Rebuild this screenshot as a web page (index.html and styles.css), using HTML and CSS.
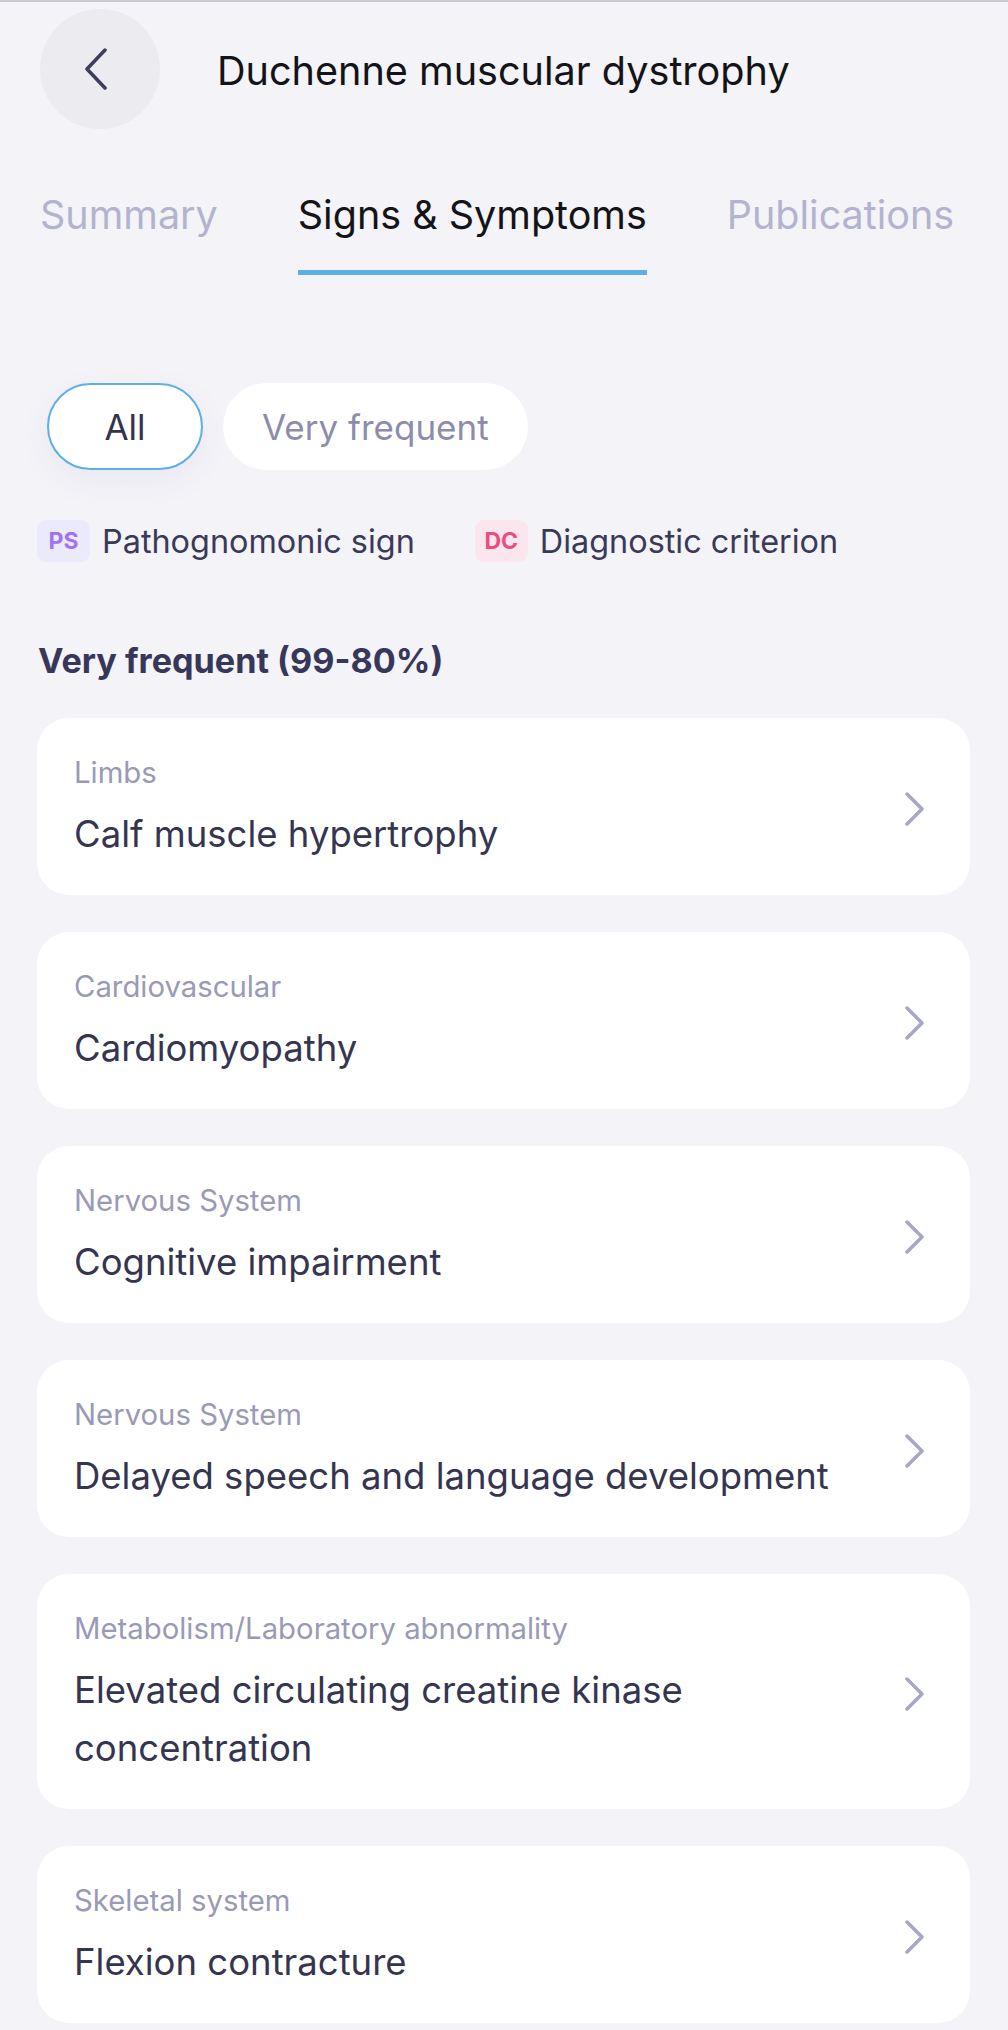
FILE: index.html
```html
<!DOCTYPE html>
<html lang="en">
<head>
<meta charset="utf-8">
<title>Duchenne muscular dystrophy</title>
<link rel="stylesheet" href="styles.css">
</head>
<body>
<div class="page">
  <header class="header">
    <button class="back" aria-label="Back">
      <svg width="24" height="42" viewBox="0 0 24 42"><path d="M21 2 L3 21 L21 40" fill="none" stroke="#3d3d5c" stroke-width="3.5" stroke-linecap="round" stroke-linejoin="round"/></svg>
    </button>
    <h1 class="title">Duchenne muscular dystrophy</h1>
  </header>

  <nav class="tabs">
    <div class="tab">Summary</div>
    <div class="tab active">Signs &amp; Symptoms</div>
    <div class="tab">Publications</div>
  </nav>

  <div class="chips">
    <div class="chip selected">All</div>
    <div class="chip">Very frequent</div>
  </div>

  <div class="legend">
    <div class="legend-item"><span class="badge ps">PS</span><span class="legend-text">Pathognomonic sign</span></div>
    <div class="legend-item"><span class="badge dc">DC</span><span class="legend-text">Diagnostic criterion</span></div>
  </div>

  <h2 class="section">Very frequent (99-80%)</h2>

  <div class="cards">
    <div class="card">
      <div class="card-body"><div class="label">Limbs</div><div class="name">Calf muscle hypertrophy</div></div>
      <svg class="chev" width="22" height="34" viewBox="0 0 22 34"><path d="M3 2 L18 17 L3 32" fill="none" stroke="#a6a6c6" stroke-width="3.5" stroke-linecap="round" stroke-linejoin="round"/></svg>
    </div>
    <div class="card">
      <div class="card-body"><div class="label">Cardiovascular</div><div class="name">Cardiomyopathy</div></div>
      <svg class="chev" width="22" height="34" viewBox="0 0 22 34"><path d="M3 2 L18 17 L3 32" fill="none" stroke="#a6a6c6" stroke-width="3.5" stroke-linecap="round" stroke-linejoin="round"/></svg>
    </div>
    <div class="card">
      <div class="card-body"><div class="label">Nervous System</div><div class="name">Cognitive impairment</div></div>
      <svg class="chev" width="22" height="34" viewBox="0 0 22 34"><path d="M3 2 L18 17 L3 32" fill="none" stroke="#a6a6c6" stroke-width="3.5" stroke-linecap="round" stroke-linejoin="round"/></svg>
    </div>
    <div class="card">
      <div class="card-body"><div class="label">Nervous System</div><div class="name">Delayed speech and language development</div></div>
      <svg class="chev" width="22" height="34" viewBox="0 0 22 34"><path d="M3 2 L18 17 L3 32" fill="none" stroke="#a6a6c6" stroke-width="3.5" stroke-linecap="round" stroke-linejoin="round"/></svg>
    </div>
    <div class="card">
      <div class="card-body"><div class="label">Metabolism/Laboratory abnormality</div><div class="name">Elevated circulating creatine kinase concentration</div></div>
      <svg class="chev" width="22" height="34" viewBox="0 0 22 34"><path d="M3 2 L18 17 L3 32" fill="none" stroke="#a6a6c6" stroke-width="3.5" stroke-linecap="round" stroke-linejoin="round"/></svg>
    </div>
    <div class="card">
      <div class="card-body"><div class="label">Skeletal system</div><div class="name">Flexion contracture</div></div>
      <svg class="chev" width="22" height="34" viewBox="0 0 22 34"><path d="M3 2 L18 17 L3 32" fill="none" stroke="#a6a6c6" stroke-width="3.5" stroke-linecap="round" stroke-linejoin="round"/></svg>
    </div>
  </div>
</div>
</body>
</html>
```

FILE: styles.css
```css
* { box-sizing: border-box; }
html, body {
  margin: 0;
  padding: 0;
  background: #f3f3f8;
  font-family: Inter, "Noto Sans", sans-serif;
}
.page {
  border-top: 2px solid #c9c9d2;
  padding-bottom: 40px;
}
.header {
  display: flex;
  align-items: center;
  padding: 7px 0 0 40px;
  gap: 57px;
}
.back {
  width: 120px;
  height: 120px;
  border-radius: 50%;
  background: #ebebf0;
  border: none;
  padding: 0 8px 0 0;
  display: flex;
  align-items: center;
  justify-content: center;
  flex: none;
}
.title {
  margin: 0;
  font-size: 39.6px;
  font-weight: 400;
  color: #141418;
  line-height: 48px;
  padding-top: 4px;
}
.tabs {
  display: flex;
  gap: 80px;
  margin-top: 62px;
  padding-left: 40px;
}
.tab {
  font-size: 39.5px;
  line-height: 48px;
  color: #b3b3cd;
  padding-bottom: 31px;
  border-bottom: 5px solid transparent;
  white-space: nowrap;
}
.tab.active {
  color: #141418;
  border-bottom-color: #5eaee8;
}
.chips {
  display: flex;
  gap: 20px;
  margin-top: 108px;
  padding-left: 47px;
}
.chip {
  height: 87px;
  border-radius: 44px;
  background: #ffffff;
  border: 2px solid transparent;
  display: flex;
  align-items: center;
  justify-content: center;
  padding: 0 37px;
  font-size: 35px;
  color: #8d8dab;
}
.chip.selected {
  width: 156px;
  border-color: #5eaee8;
  color: #33334f;
  box-shadow: 0 10px 34px rgba(60, 60, 100, 0.06);
}
.legend {
  display: flex;
  gap: 60px;
  margin-top: 50px;
  padding-left: 37px;
}
.legend-item {
  display: flex;
  align-items: center;
  gap: 12px;
}
.badge {
  width: 53px;
  height: 42px;
  border-radius: 9px;
  display: flex;
  align-items: center;
  justify-content: center;
  font-size: 23px;
  font-weight: 700;
}
.badge.ps { background: #ebeafa; color: #a173ee; }
.badge.dc { background: #fbe6ed; color: #ec4d80; }
.legend-text {
  font-size: 32.4px;
  color: #3a3a58;
}
.section {
  margin: 79px 0 37px 38px;
  font-size: 34.2px;
  line-height: 40px;
  font-weight: 700;
  color: #37375a;
}
.cards {
  display: flex;
  flex-direction: column;
  gap: 37px;
  padding: 0 38px 0 37px;
}
.card {
  background: #ffffff;
  border-radius: 32px;
  display: flex;
  align-items: center;
  padding: 36px 44px 32px 37px;
}
.card-body {
  flex: 1;
  min-width: 0;
}
.label {
  font-size: 29.3px;
  line-height: 38px;
  color: #9a9ab6;
}
.name {
  margin-top: 13px;
  font-size: 36.5px;
  line-height: 58px;
  color: #35354f;
  padding-right: 60px;
}
.chev {
  flex: none;
}
```
